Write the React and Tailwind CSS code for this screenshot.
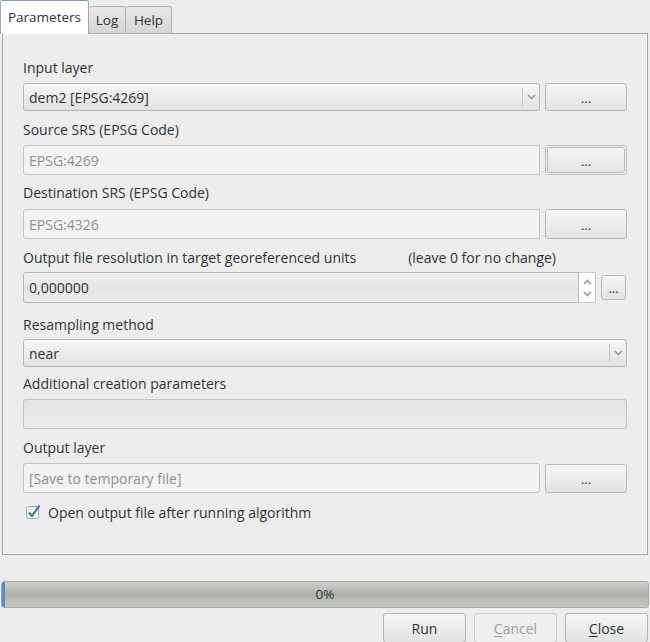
import React from "react";

const font = { fontFamily: '"Open Sans", "DejaVu Sans", sans-serif' };

function Chevron({ up = false }) {
  return (
    <svg width="9" height="6" viewBox="0 0 9 6">
      <path
        d={up ? "M1 5 L4.5 1.5 L8 5" : "M1 1 L4.5 4.5 L8 1"}
        fill="none"
        stroke="#9a9a9a"
        strokeWidth="1.6"
      />
    </svg>
  );
}

function DotsButton({ className = "" }) {
  return (
    <div
      className={
        "flex items-center justify-center rounded-[3px] border border-[#b9b9b9] bg-gradient-to-b from-[#f6f6f6] to-[#e3e3e3] text-[#333] text-[13px] " +
        className
      }
    >
      <span className="leading-none pt-[2px]">...</span>
    </div>
  );
}

function Label({ children, className = "" }) {
  return (
    <div className={"h-[20px] flex items-center text-[14px] text-[#2e3436] " + className}>
      {children}
    </div>
  );
}

function Combo({ text, className = "" }) {
  return (
    <div
      className={
        "flex h-[28px] items-stretch rounded-[3px] border border-[#b6b6b6] bg-gradient-to-b from-[#f6f6f6] to-[#e2e2e2] " +
        className
      }
    >
      <div className="flex flex-1 items-center pl-[5px] text-[14px] text-[#2e3436]">{text}</div>
      <div className="my-[4px] w-px bg-[#c4c4c4]" />
      <div className="flex w-[16px] items-center justify-center">
        <Chevron />
      </div>
    </div>
  );
}

function TextField({ text, className = "", gray = false }) {
  return (
    <div
      className={
        "flex h-[30px] items-center rounded-[3px] border border-[#c3c3c3] pl-[5px] text-[14px] text-[#8f8f8f] " +
        (gray ? "bg-gradient-to-b from-[#e4e4e4] to-[#ececec] " : "bg-[#f3f3f3] ") +
        className
      }
    >
      {text}
    </div>
  );
}

export default function App() {
  return (
    <div className="relative h-[642px] w-[650px] overflow-hidden bg-[#ededed]" style={font}>
      {/* Tabs */}
      <div className="flex h-[34px] items-end">
        <div className="relative z-10 flex h-[34px] w-[89px] items-center justify-center rounded-t-[3px] border border-b-0 border-[#a8a8a8] border-t-[#6ea0d8] bg-white text-[13.5px] text-[#2e3436]">
          Parameters
        </div>
        <div className="flex h-[28px] w-[37px] items-center justify-center rounded-t-[3px] border border-l-0 border-[#b0b0b0] bg-gradient-to-b from-[#e9e9e9] to-[#d6d6d6] text-[13.5px] text-[#2e3436]">
          Log
        </div>
        <div className="flex h-[28px] w-[46px] items-center justify-center rounded-t-[3px] border border-l-0 border-[#b0b0b0] bg-gradient-to-b from-[#e9e9e9] to-[#d6d6d6] text-[13.5px] text-[#2e3436]">
          Help
        </div>
      </div>

      {/* Panel */}
      <div className="ml-[2px] -mt-px h-[522px] w-[646px] border border-[#a3a3a3] bg-[#ededed] shadow-[inset_-1px_-1px_0_#ffffff]">
        <div className="pl-[20px] pr-[20px] pt-[23px]">
          <Label>Input layer</Label>
          <div className="mt-[6px] flex gap-[5px]">
            <Combo text="dem2 [EPSG:4269]" className="w-[517px]" />
            <DotsButton className="h-[28px] w-[82px]" />
          </div>

          <Label className="mt-[8px]">Source SRS (EPSG Code)</Label>
          <div className="mt-[6px] flex gap-[5px]">
            <TextField text="EPSG:4269" className="w-[517px]" />
            <div className="h-[30px] w-[82px] rounded-[3px] border border-[#c0c0c0] p-px">
              <DotsButton className="h-full w-full border-[#999]" />
            </div>
          </div>

          <Label className="mt-[7px]">Destination SRS (EPSG Code)</Label>
          <div className="mt-[7px] flex gap-[5px]">
            <TextField text="EPSG:4326" className="w-[517px]" />
            <DotsButton className="h-[30px] w-[82px]" />
          </div>

          <Label className="mt-[8px]">
            <span>Output file resolution in target georeferenced units</span>
            <span className="ml-[52px]">(leave 0 for no change)</span>
          </Label>
          <div className="mt-[5px] flex items-center">
            <div className="flex h-[31px] w-[573px] items-stretch">
              <div className="flex flex-1 items-center rounded-l-[3px] border border-[#b5b5b5] bg-gradient-to-b from-[#f3f3f3] via-[#e6e6e6] to-[#ececec] pl-[5px] text-[14px] text-[#2e3436]">
                0,000000
              </div>
              <div className="flex w-[17px] flex-col items-center justify-center gap-[6px] border border-l-0 border-[#c8c8c8] bg-white">
                <Chevron up />
                <Chevron />
              </div>
            </div>
            <DotsButton className="ml-[5px] h-[25px] w-[25px]" />
          </div>

          <Label className="mt-[11px]">Resampling method</Label>
          <Combo text="near" className="mt-[5px] w-[604px]" />

          <Label className="mt-[6px]">Additional creation parameters</Label>
          <TextField text="" gray className="mt-[6px] w-[604px]" />

          <Label className="mt-[8px]">Output layer</Label>
          <div className="mt-[6px] flex gap-[5px]">
            <TextField text="[Save to temporary file]" className="w-[517px]" />
            <DotsButton className="mt-px h-[29px] w-[82px]" />
          </div>

          <div className="mt-[9px] flex h-[20px] items-center gap-[6px] pl-[3px]">
            <svg width="16" height="16" viewBox="0 0 16 16">
              <rect x="0.5" y="2.5" width="12" height="12" rx="2" fill="#f4f4f4" stroke="#a8a8a8" />
              <path d="M3 8.5 L6 12 L13.5 1.5" fill="none" stroke="#3b78c9" strokeWidth="2.2" />
            </svg>
            <span className="text-[14px] text-[#2e3436]">Open output file after running algorithm</span>
          </div>
        </div>
      </div>

      {/* Progress bar */}
      <div className="relative ml-[1px] mt-[26px] flex h-[27px] w-[648px] items-center justify-center rounded-[3px] border border-[#a9aaa7] bg-gradient-to-b from-[#cfd0cd] via-[#aeb0ab] to-[#c6c8c4] text-[13.5px] text-[#2e3436]">
        <div className="absolute left-0 top-0 h-full w-[3px] rounded-l-[2px] bg-[#4a90d9]" />
        0%
      </div>

      {/* Buttons */}
      <div className="mt-[5px] flex justify-end gap-[8px] pr-[2px]">
        <div className="flex h-[30px] w-[83px] items-center justify-center rounded-[3px] border border-[#b5b5b5] bg-gradient-to-b from-[#f6f6f6] to-[#e3e3e3] text-[14px] text-[#2e3436]">
          Run
        </div>
        <div className="flex h-[30px] w-[83px] items-center justify-center rounded-[3px] border border-[#cfcfcf] bg-[#efefef] text-[14px] text-[#a0a0a0]">
          <span className="underline underline-offset-2">C</span>ancel
        </div>
        <div className="flex h-[30px] w-[83px] items-center justify-center rounded-[3px] border border-[#b5b5b5] bg-gradient-to-b from-[#f6f6f6] to-[#e3e3e3] text-[14px] text-[#2e3436]">
          <span className="underline underline-offset-2">C</span>lose
        </div>
      </div>
    </div>
  );
}
